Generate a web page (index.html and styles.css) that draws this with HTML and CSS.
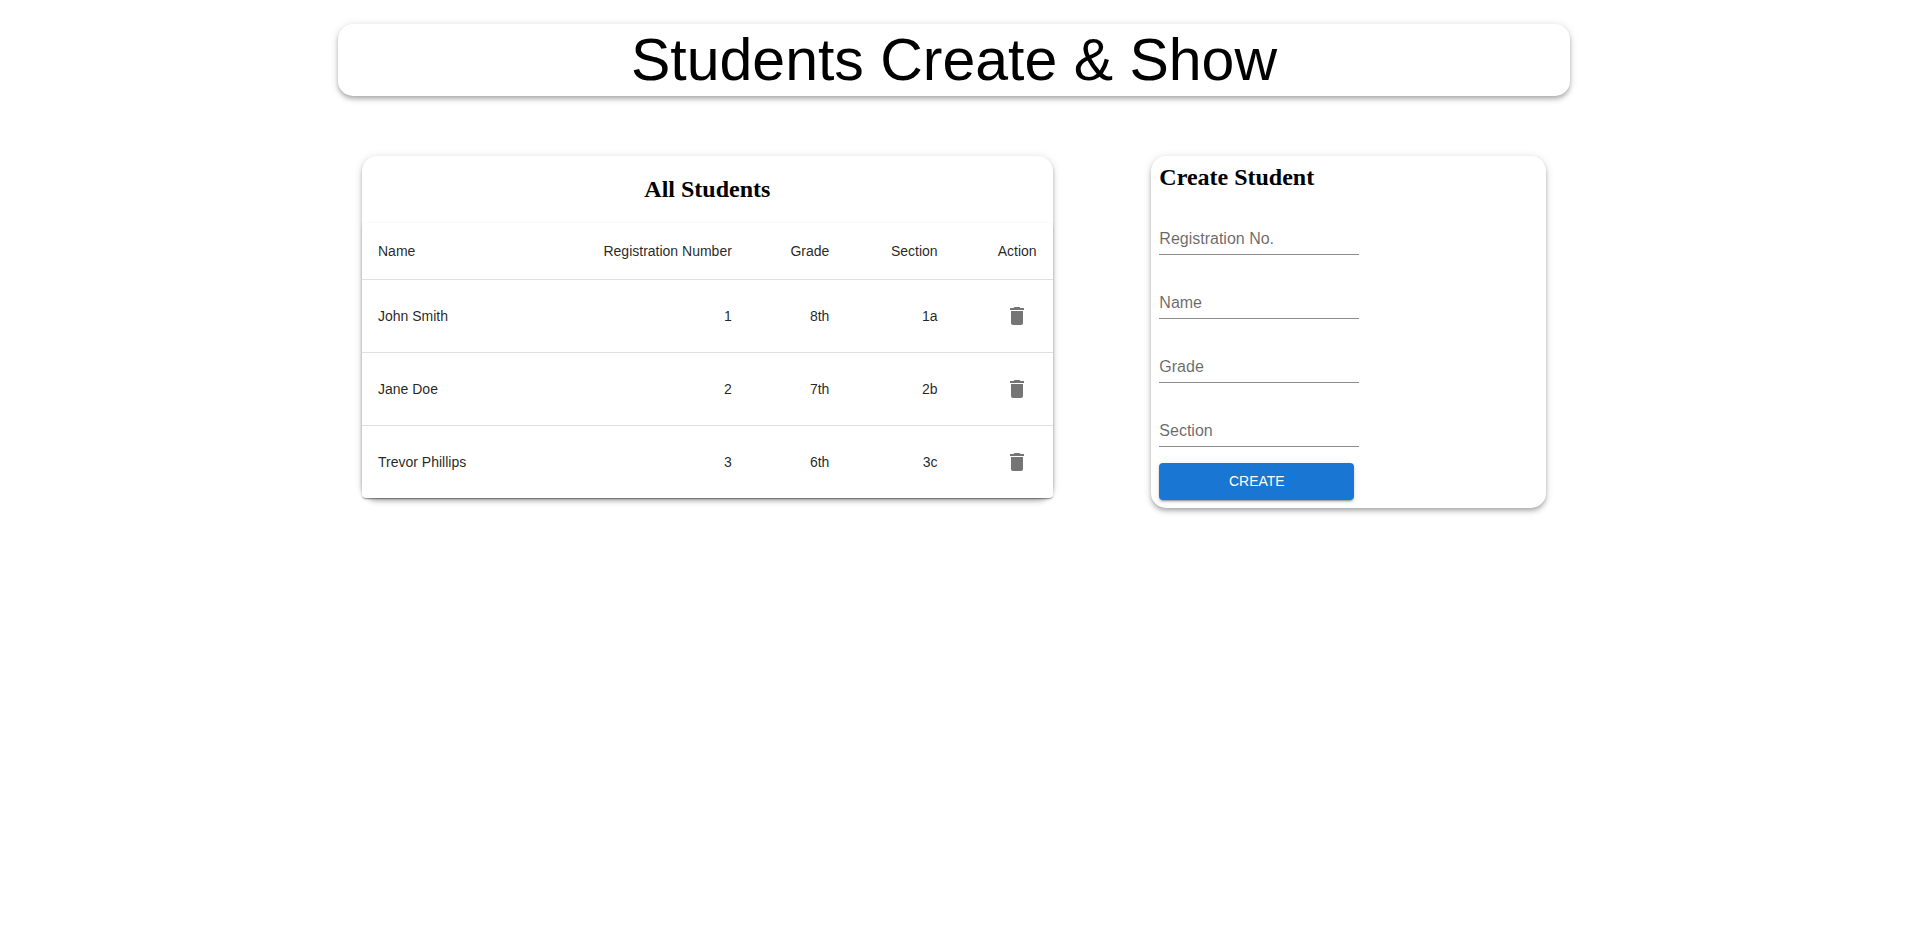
FILE: index.html
```html
<!DOCTYPE html>
<html lang="en">
<head>
<meta charset="utf-8">
<meta name="viewport" content="width=device-width, initial-scale=1">
<title>Students Create &amp; Show</title>
<link rel="stylesheet" href="styles.css">
</head>
<body>
<svg class="sprite" aria-hidden="true">
  <symbol id="icon-delete" viewBox="0 0 24 24"><path d="M6 19c0 1.100.9 2 2 2h8c1.100 0 2-.9 2-2V7H6v12zM19 4h-3.500l-1-1h-5l-1 1H5v2h14V4z"/></symbol>
</svg>
<div class="container">
  <header class="app-bar"><h1 class="app-title">Students Create &amp; Show</h1></header>
  <main class="layout">
    <section class="card list-card">
      <h2 class="card-title list-title">All Students</h2>
      <div class="table-box">
        <table class="table">
          <thead>
            <tr><th scope="col">Name</th><th scope="col">Registration Number</th><th scope="col">Grade</th><th scope="col">Section</th><th scope="col">Action</th></tr>
          </thead>
          <tbody>
            <tr><td>John Smith</td><td>1</td><td>8th</td><td>1a</td><td><button class="icon-button" type="button" aria-label="Delete John Smith"><svg class="icon"><use href="#icon-delete"/></svg></button></td></tr>
            <tr><td>Jane Doe</td><td>2</td><td>7th</td><td>2b</td><td><button class="icon-button" type="button" aria-label="Delete Jane Doe"><svg class="icon"><use href="#icon-delete"/></svg></button></td></tr>
            <tr><td>Trevor Phillips</td><td>3</td><td>6th</td><td>3c</td><td><button class="icon-button" type="button" aria-label="Delete Trevor Phillips"><svg class="icon"><use href="#icon-delete"/></svg></button></td></tr>
          </tbody>
        </table>
      </div>
    </section>
    <section class="card form-card">
      <h2 class="card-title">Create Student</h2>
      <form class="form">
        <div class="field"><input class="field-input" id="regNo" type="text" placeholder=" "><label class="field-label" for="regNo">Registration No.</label></div>
        <div class="field"><input class="field-input" id="name" type="text" placeholder=" "><label class="field-label" for="name">Name</label></div>
        <div class="field"><input class="field-input" id="grade" type="text" placeholder=" "><label class="field-label" for="grade">Grade</label></div>
        <div class="field"><input class="field-input" id="section" type="text" placeholder=" "><label class="field-label" for="section">Section</label></div>
        <button class="submit" type="button">CREATE</button>
      </form>
    </section>
  </main>
</div>
</body>
</html>
```
FILE: styles.css
```css
*, *::before, *::after {
  box-sizing: border-box;
}

body {
  margin: 0;
  background: #fff;
  color: #000;
  font-family: "Liberation Sans", Arial, sans-serif;
}

.sprite {
  display: none;
}

.container {
  max-width: 1280px;
  margin: 0 auto;
  padding: 24px 23px 24px 25px;
}

.app-bar,
.card {
  background: #fff;
  border-radius: 15px;
  box-shadow: 0 2px 4px -1px rgba(0, 0, 0, 0.2), 0 4px 5px 0 rgba(0, 0, 0, 0.14), 0 1px 10px 0 rgba(0, 0, 0, 0.12);
}

.app-title {
  margin: 0;
  font-size: 59px;
  font-weight: 400;
  line-height: 72px;
  text-align: center;
}

.layout {
  display: grid;
  grid-template-columns: 7fr 1fr 4fr;
  align-items: start;
  margin-top: 60px;
  padding: 0 24px;
}

.form-card {
  grid-column: 3;
  padding: 8px;
}

.card-title {
  margin: 0;
  font-family: "Liberation Serif", "Times New Roman", serif;
  font-size: 24px;
  font-weight: 700;
  line-height: 27px;
}

.list-title {
  padding: 20px 0;
  text-align: center;
}

.table-box {
  overflow-x: auto;
  background: #fff;
  border-radius: 4px;
  box-shadow: 0 2px 1px -1px rgba(0, 0, 0, 0.2), 0 1px 1px 0 rgba(0, 0, 0, 0.14), 0 1px 3px 0 rgba(0, 0, 0, 0.12);
}

.table {
  width: 100%;
  min-width: 650px;
  border-collapse: collapse;
}

.table th,
.table td {
  padding: 16px;
  border-bottom: 1px solid #e0e0e0;
  color: rgba(0, 0, 0, 0.87);
  font-size: 14px;
  font-weight: 400;
  line-height: 20px;
  text-align: right;
}

.table th {
  line-height: 24px;
}

.table th:first-child,
.table td:first-child {
  text-align: left;
}

.table tbody tr:last-child td {
  border-bottom: 0;
}

.icon-button {
  display: inline-flex;
  padding: 8px;
  border: 0;
  border-radius: 50%;
  background: transparent;
  color: rgba(0, 0, 0, 0.54);
  vertical-align: middle;
  cursor: pointer;
}

.icon {
  width: 24px;
  height: 24px;
  fill: currentColor;
}

.form {
  display: flex;
  flex-direction: column;
  align-items: flex-start;
  gap: 16px;
  padding-top: 16px;
}

.field {
  display: grid;
  width: 200px;
  max-width: 100%;
}

.field-input,
.field-label {
  grid-area: 1 / 1;
  font-size: 16px;
  line-height: 23px;
}

.field-input {
  width: 100%;
  height: 48px;
  padding: 20px 0 4px;
  border: 0;
  border-bottom: 1px solid #8c8c8c;
  background: transparent;
  color: rgba(0, 0, 0, 0.87);
  font-family: inherit;
  outline: 0;
}

.field-input:focus {
  border-bottom-color: #1976d2;
}

.field-label {
  padding-top: 20px;
  color: rgba(0, 0, 0, 0.6);
  pointer-events: none;
}

.field-input:focus + .field-label,
.field-input:not(:placeholder-shown) + .field-label {
  padding-top: 0;
  font-size: 12px;
}

.submit {
  width: 195px;
  padding: 6px 16px;
  border: 0;
  border-radius: 4px;
  background: #1976d2;
  box-shadow: 0 3px 1px -2px rgba(0, 0, 0, 0.2), 0 2px 2px 0 rgba(0, 0, 0, 0.14), 0 1px 5px 0 rgba(0, 0, 0, 0.12);
  color: #fff;
  font-family: inherit;
  font-size: 14px;
  line-height: 25px;
  cursor: pointer;
}
```
